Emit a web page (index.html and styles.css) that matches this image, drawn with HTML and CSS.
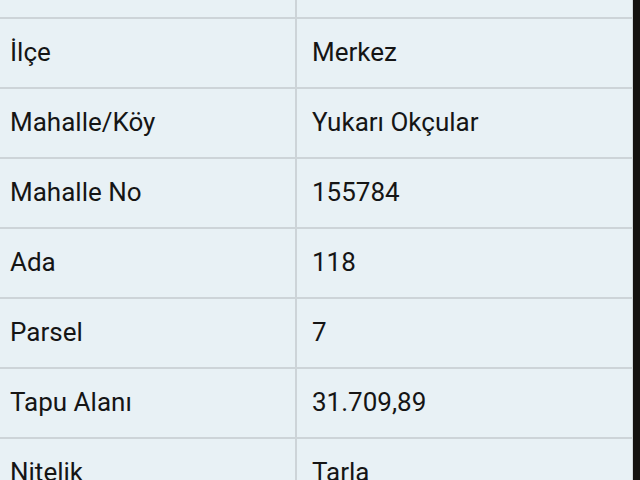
FILE: index.html
```html
<!DOCTYPE html>
<html lang="tr">
<head>
<meta charset="utf-8">
<link rel="stylesheet" href="styles.css">
</head>
<body>
<div class="screen">
  <div class="table">
    <div class="cell label top"></div><div class="cell value top"></div>
    <div class="cell label">İlçe</div><div class="cell value">Merkez</div>
    <div class="cell label">Mahalle/Köy</div><div class="cell value">Yukarı Okçular</div>
    <div class="cell label">Mahalle No</div><div class="cell value">155784</div>
    <div class="cell label">Ada</div><div class="cell value">118</div>
    <div class="cell label">Parsel</div><div class="cell value">7</div>
    <div class="cell label">Tapu Alanı</div><div class="cell value">31.709,89</div>
    <div class="cell label">Nitelik</div><div class="cell value">Tarla</div>
  </div>
  <div class="edge"></div>
</div>
</body>
</html>
```
FILE: styles.css
```css
html, body {
  margin: 0;
  padding: 0;
  height: 480px;
  overflow: hidden;
  background: #e8f1f5;
}
.screen {
  display: flex;
  width: 640px;
  height: 480px;
}
.table {
  width: 632px;
  flex: none;
  display: grid;
  grid-template-columns: 297px 1fr;
  grid-template-rows: 19px;
  grid-auto-rows: 70px;
  border-right: 1px solid #cfd6da;
  align-content: start;
  font-family: Roboto, "Noto Sans", sans-serif;
  font-size: 26px;
  color: #151515;
}
.cell {
  box-sizing: border-box;
  border-bottom: 2px solid #cdd4d8;
  display: flex;
  align-items: center;
  padding-bottom: 2px;
}
.label {
  border-right: 2px solid #cdd4d8;
  padding-left: 10px;
}
.value {
  padding-left: 15px;
}
.edge {
  flex: 1;
  background: #141210;
}
```
